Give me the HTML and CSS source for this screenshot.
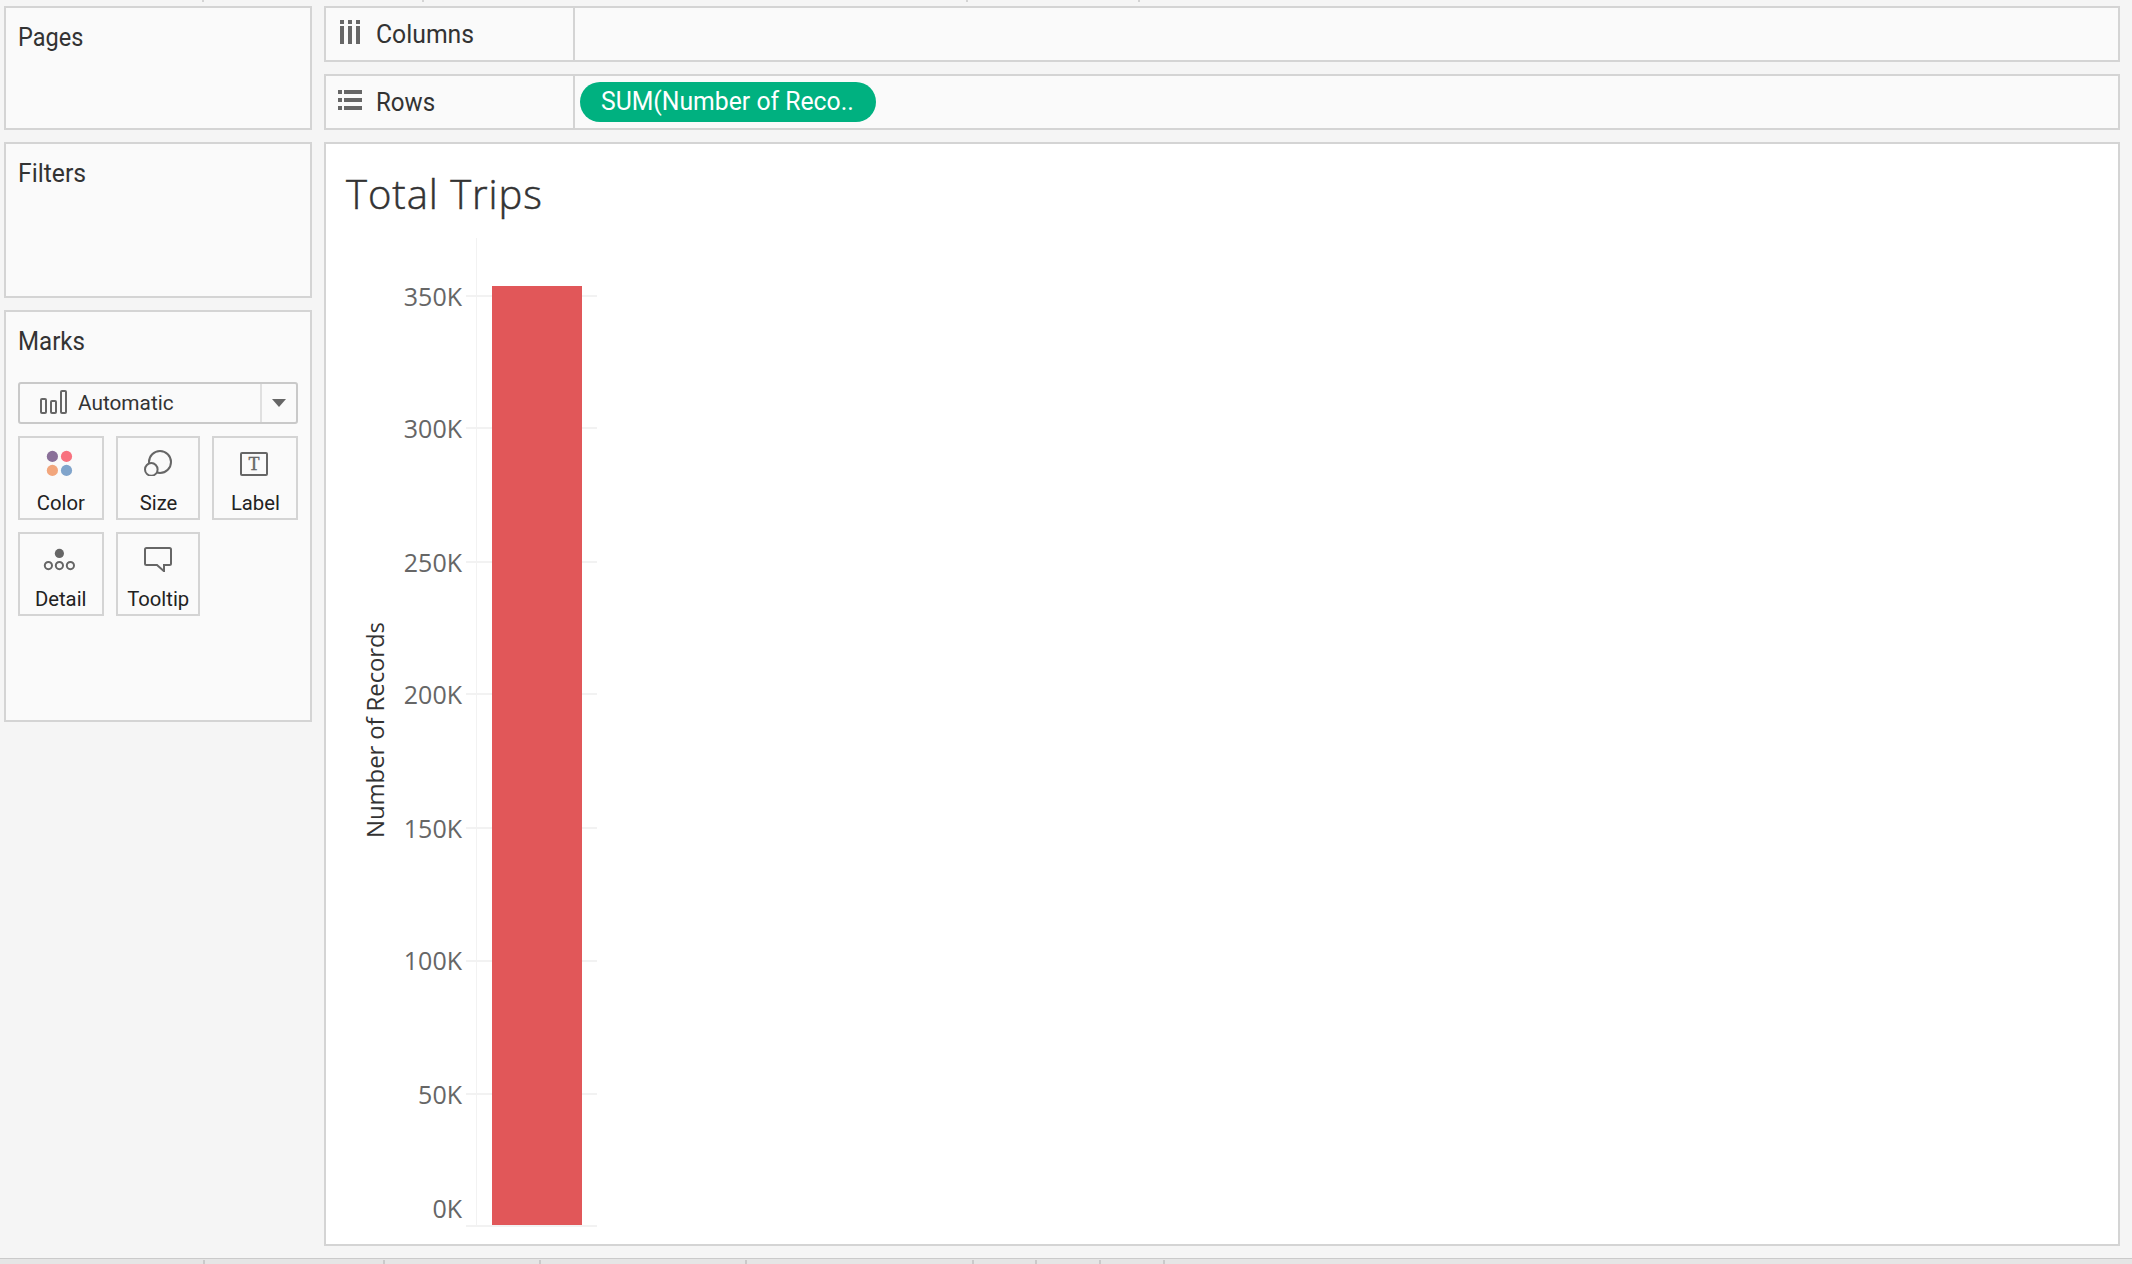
FILE: index.html
```html
<!DOCTYPE html>
<html lang="en">
<head>
<meta charset="utf-8">
<title>Total Trips</title>
<link rel="stylesheet" href="styles.css">
</head>
<body>
<div class="app">
  <div class="toolbar-edge">
    <i></i><i></i><i></i><i></i>
  </div>
  <div class="workspace">
    <aside class="sidebar">
      <section class="card pages"><h2 class="heading"><span class="narrow tight">Pages</span></h2></section>
      <section class="card filters"><h2 class="heading"><span class="narrow wide">Filters</span></h2></section>
      <section class="card marks">
        <h2 class="heading"><span class="narrow">Marks</span></h2>
        <div class="mark-type">
          <svg width="28" height="24" viewBox="0 0 28 24" fill="none" stroke="#666" stroke-width="2"><rect x="1" y="9" width="5" height="14" rx="1"/><rect x="11" y="11" width="5" height="12" rx="1"/><rect x="21" y="1" width="5" height="22" rx="1"/></svg>
          <span class="mark-name"><span class="narrow wide">Automatic</span></span>
          <span class="arrow"><svg width="14" height="8" viewBox="0 0 14 8"><path d="M0 0H14L7 8Z" fill="#666"/></svg></span>
        </div>
        <div class="mark-grid">
          <div class="mark">
            <svg width="36" height="32" viewBox="0 0 36 32"><circle cx="9.400" cy="12.4" r="5.6" fill="#8a7099"/><circle cx="23.500" cy="12.4" r="5.6" fill="#f8727f"/><circle cx="9.400" cy="26.4" r="5.6" fill="#f2a67c"/><circle cx="23.500" cy="26.4" r="5.6" fill="#80a4cb"/></svg>
            <span class="narrow">Color</span>
          </div>
          <div class="mark">
            <svg width="36" height="32" viewBox="0 0 36 32" fill="#fafafa" stroke="#666" stroke-width="2"><circle cx="20" cy="18" r="11"/><circle cx="11.3" cy="25.4" r="6.3"/></svg>
            <span class="narrow">Size</span>
          </div>
          <div class="mark">
            <svg width="36" height="32" viewBox="0 0 36 32"><rect x="4" y="9" width="26" height="22" rx="1" fill="none" stroke="#666" stroke-width="2"/><text class="label-glyph" x="17" y="26" text-anchor="middle">T</text></svg>
            <span class="narrow">Label</span>
          </div>
          <div class="mark">
            <svg width="36" height="32" viewBox="0 0 36 32" fill="none" stroke="#666" stroke-width="2"><circle cx="16.4" cy="13.4" r="4.6" fill="#666" stroke="none"/><circle cx="5.4" cy="25.6" r="3.6"/><circle cx="16.4" cy="25.6" r="3.6"/><circle cx="27.4" cy="25.6" r="3.6"/></svg>
            <span class="narrow">Detail</span>
          </div>
          <div class="mark">
            <svg width="36" height="32" viewBox="0 0 36 32" fill="none" stroke="#666" stroke-width="2"><path d="M6.500 8H29.500Q31 8 31 9.500V23.500Q31 25 29.500 25H24V31.200L17 25H6.500Q5 25 5 23.500V9.500Q5 8 6.500 8Z"/></svg>
            <span class="narrow">Tooltip</span>
          </div>
        </div>
      </section>
    </aside>
    <main class="content">
      <div class="shelf">
        <div class="shelf-name columns-name">
          <svg width="24" height="24" viewBox="0 0 24 24" fill="#666"><path d="M2 0h4v4H2zM10 0h4v4h-4zM18 0h4v4h-4zM2 6h4v18H2zM10 6h4v18h-4zM18 6h4v18h-4z"/></svg>
          <span class="narrow wide">Columns</span>
        </div>
      </div>
      <div class="shelf">
        <div class="shelf-name rows-name">
          <svg width="24" height="24" viewBox="0 0 24 24" fill="#666"><path d="M0 2h4v4H0zM0 10h4v4H0zM0 18h4v4H0zM6 2h18v4H6zM6 10h18v4H6zM6 18h18v4H6z"/></svg>
          <span class="narrow">Rows</span>
        </div>
        <div class="pill"><span class="narrow wide">SUM(Number of Reco..</span></div>
      </div>
      <section class="view">
        <svg class="chart" width="1792" height="1100" viewBox="326 144 1792 1100">
          <text class="title" x="346" y="208.500" textLength="196">Total Trips</text>
          <g class="grid">
            <path d="M466 296H597M466 428H597M466 562H597M466 694H597M466 828H597M466 961H597M466 1094H597M466 1226H597"/>
            <path class="axis" d="M476.500 238V1225"/>
          </g>
          <rect x="492" y="286" width="90" height="939" fill="#e15759"/>
          <g class="ticks" text-anchor="end">
            <text x="462" y="306">350K</text>
            <text x="462" y="438">300K</text>
            <text x="462" y="572">250K</text>
            <text x="462" y="704">200K</text>
            <text x="462" y="838">150K</text>
            <text x="462" y="970">100K</text>
            <text x="462" y="1104">50K</text>
            <text x="462" y="1218">0K</text>
          </g>
          <text class="axis-title" transform="translate(384 838) rotate(-90)" textLength="216">Number of Records</text>
        </svg>
      </section>
    </main>
  </div>
  <footer class="tabs">
    <i></i><i></i><i></i><i></i><i></i><i></i><i></i><i></i>
  </footer>
</div>
</body>
</html>
```
FILE: styles.css
```css
* { box-sizing: border-box; }
body {
  margin: 0;
  background: #f5f5f5;
  color: #333;
  font-family: Roboto, "Liberation Sans", sans-serif;
  font-size: 25px;
}
svg { display: block; flex: none; }
.app {
  display: flex;
  flex-direction: column;
  width: 2132px;
  height: 1264px;
  overflow: hidden;
}
.toolbar-edge { display: flex; height: 2px; margin-bottom: 4px; }
.toolbar-edge i { width: 2px; background: #d4d4d4; margin-left: 202px; }
.toolbar-edge i:nth-child(2) { margin-left: 218px; }
.toolbar-edge i:nth-child(3) { margin-left: 542px; }
.toolbar-edge i:nth-child(4) { margin-left: 170px; }

.workspace { display: flex; gap: 12px; height: 1240px; padding: 0 12px 0 4px; }
.sidebar { display: flex; flex-direction: column; gap: 12px; width: 308px; }
.card { background: #fafafa; border: 2px solid #d4d4d4; padding: 15px 12px; }
.pages { height: 124px; }
.filters { height: 156px; }
.marks { height: 412px; }
.narrow {
  display: inline-block;
  transform: scaleX(.965);
  transform-origin: 0 50%;
  white-space: nowrap;
}
.narrow.tight { transform: scaleX(.94); }
.narrow.wide { transform: scaleX(.99); }
.heading { margin: 0; font-size: 25px; font-weight: 400; line-height: 30px; }

.mark-type {
  display: flex;
  align-items: center;
  height: 42px;
  margin-top: 25px;
  padding-left: 20px;
  border: 2px solid #c9c9c9;
  border-radius: 3px;
  font-size: 21px;
}
.mark-type > svg { margin-top: -2px; }
.mark-name { flex: 1; margin-left: 10px; }
.arrow {
  display: flex;
  align-items: center;
  justify-content: center;
  width: 36px;
  height: 38px;
  border-left: 2px solid #e0e0e0;
}
.mark-grid {
  display: grid;
  grid-template-columns: 86px 84px 86px;
  grid-auto-rows: 84px;
  gap: 12px;
  margin-top: 12px;
}
.mark {
  display: flex;
  flex-direction: column;
  align-items: center;
  padding-top: 6px;
  border: 2px solid #d4d4d4;
  color: #222;
  font-size: 21px;
  line-height: 24px;
}
.mark .narrow { margin-top: 15px; transform-origin: 50% 50%; }
.label-glyph { font: 18px "Liberation Serif", serif; fill: #666; stroke: #666; stroke-width: .4px; }

.content { display: flex; flex-direction: column; gap: 12px; width: 1796px; }
.shelf { display: flex; align-items: center; height: 56px; background: #fafafa; border: 2px solid #d4d4d4; }
.shelf-name {
  display: flex;
  gap: 14px;
  width: 249px;
  height: 52px;
  padding: 12px 0 0 12px;
  border-right: 2px solid #d4d4d4;
  line-height: 30px;
}
.pill {
  width: 296px;
  height: 40px;
  margin-left: 5px;
  padding-left: 21px;
  border-radius: 20px;
  background: #00b180;
  color: #fff;
  line-height: 40px;
}
.view { height: 1104px; background: #fff; border: 2px solid #d4d4d4; }
.chart { font-family: "Open Sans", "Noto Sans", sans-serif; }
.title { font-size: 40px; font-weight: 300; fill: #333; stroke: #333; stroke-width: .5px; }
.grid path { fill: none; stroke: #f2f2f2; stroke-width: 2; }
.grid .axis { stroke-width: 1; }
.ticks { font-size: 25px; fill: #666; }
.axis-title { font-size: 24px; fill: #333; }

.tabs { display: flex; height: 6px; margin-top: 12px; background: #e5e5e5; border-top: 1px solid #cacaca; padding-top: 1px; }
.tabs i { width: 2px; background: #cacaca; margin-left: 62px; }
.tabs i:nth-child(1) { margin-left: 203px; }
.tabs i:nth-child(2) { margin-left: 178px; }
.tabs i:nth-child(3) { margin-left: 154px; }
.tabs i:nth-child(4) { margin-left: 204px; }
.tabs i:nth-child(5) { margin-left: 225px; }
.tabs i:nth-child(6) { margin-left: 61px; }
```
